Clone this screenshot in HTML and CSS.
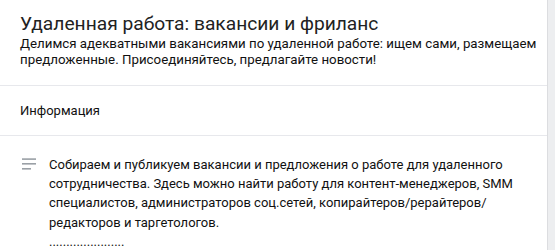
FILE: index.html
```html
<!DOCTYPE html>
<html lang="ru">
<head>
<meta charset="utf-8">
<link rel="stylesheet" href="styles.css">
</head>
<body>
<div class="page">
  <div class="card">
    <div class="header">
      <h1 class="title">Удаленная работа: вакансии и фриланс</h1>
      <p class="desc">Делимся адекватными вакансиями по удаленной работе: ищем сами, размещаем предложенные. Присоединяйтесь, предлагайте новости!</p>
    </div>
    <div class="section-title">Информация</div>
    <div class="info">
      <svg class="icon" width="14" height="12" viewBox="0 0 14 12"><rect x="0" y="0.3" width="14" height="1.6" fill="#9aa0a6"/><rect x="0" y="5" width="14" height="1.6" fill="#9aa0a6"/><rect x="0" y="10" width="9" height="1.6" fill="#9aa0a6"/></svg>
      <div class="info-text">Собираем и публикуем вакансии и предложения о работе для удаленного сотрудничества. Здесь можно найти работу для контент-менеджеров, SMM специалистов, администраторов соц.сетей, копирайтеров/рерайтеров/ редакторов и таргетологов.<br>......................</div>
    </div>
  </div>
</div>
</body>
</html>
```
FILE: styles.css
```css
html, body { margin: 0; padding: 0; }
body { background: #edeef0; font-family: Roboto, "Noto Sans", sans-serif; color: #222; }
.page { display: flex; }
.card { width: 547px; background: #fff; border-right: 1px solid #dcdde0; height: 250px; overflow: hidden; }
.header { padding: 12px 8px 17px 20px; border-bottom: 1px solid #e7e8ec; }
.title { margin: 0; font-size: 19.2px; font-weight: 400; line-height: 24px; color: #222; }
.desc { margin: 0; font-size: 13.3px; line-height: 16px; color: #111; }
.section-title { padding: 16px 20px 15px; font-size: 13px; line-height: 18px; border-bottom: 1px solid #e7e8ec; color: #111; }
.info { display: flex; gap: 13px; padding: 19px 20px 0 22px; }
.icon { flex: none; margin-top: 3px; }
.info-text { font-size: 13px; line-height: 19.2px; color: #111; }
```
